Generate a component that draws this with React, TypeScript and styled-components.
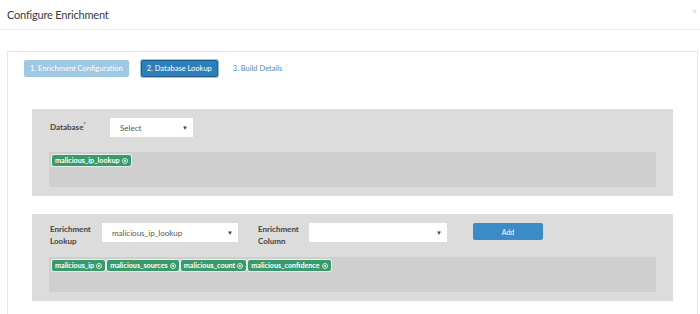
import React from "react";
import styled, { createGlobalStyle } from "styled-components";

const GlobalStyle = createGlobalStyle`
  html, body {
    margin: 0;
    padding: 0;
    background: #ffffff;
    font-family: Lato, "Open Sans", sans-serif;
    overflow: hidden;
  }
`;

const Page = styled.div`
  width: 700px;
  height: 314px;
  overflow: hidden;
`;

const ModalHeader = styled.div`
  height: 29px;
  display: flex;
  align-items: center;
  justify-content: space-between;
  padding: 0 3px 0 7px;
  border-bottom: 1px solid #eeeeee;
`;

const Title = styled.div`
  font-size: 11px;
  letter-spacing: -0.2px;
  color: #3a3a3a;
`;

const Close = styled.span`
  font-size: 8px;
  color: #c8c8c8;
  margin-top: -8px;
`;

const ModalBody = styled.div`
  padding: 21px 2px 0 7px;
`;

const Card = styled.div`
  border: 1px solid #e6e6e6;
  border-bottom: none;
  padding: 8px 24px 40px 16px;
`;

const Steps = styled.div`
  display: flex;
  align-items: center;
  gap: 12px;
`;

const Step = styled.div<{ $state: "done" | "active" | "todo" }>`
  height: 17px;
  display: flex;
  align-items: center;
  padding: 0 ${(p) => (p.$state === "todo" ? "2px" : "5px")};
  font-size: 7.5px;
  border-radius: 2px;
  box-sizing: border-box;
  color: ${(p) => (p.$state === "todo" ? "#5a88ad" : "#ffffff")};
  background: ${(p) =>
    p.$state === "done" ? "#9ec8e4" : p.$state === "active" ? "#2c7fb8" : "transparent"};
  border: 1px solid
    ${(p) => (p.$state === "active" ? "#1f5f8f" : "transparent")};
  ${(p) => p.$state === "active" && "box-shadow: 0 0 0 1px #9cc3de;"}
`;

const Panel = styled.div<{ $first?: boolean }>`
  margin: ${(p) => (p.$first ? "32px" : "18px")} 0 0 8px;
  background: #dcdcdc;
  padding: 9px 17px;
`;

const Row = styled.div`
  display: flex;
  align-items: flex-start;
  min-height: 24px;
`;

const Label = styled.div<{ $w: number; $gap?: number }>`
  width: ${(p) => p.$w}px;
  margin-left: ${(p) => p.$gap ?? 0}px;
  flex-shrink: 0;
  padding-left: 1px;
  box-sizing: border-box;
  font-size: 8px;
  line-height: 12px;
  font-weight: 700;
  color: #444444;

  sup {
    font-size: 5px;
    vertical-align: 4px;
  }
`;

const Select = styled.div<{ $w: number }>`
  width: ${(p) => p.$w}px;
  height: 19px;
  background: #ffffff;
  display: flex;
  align-items: center;
  justify-content: space-between;
  padding: 0 5px 0 10px;
  box-sizing: border-box;
  font-size: 8px;
  color: #555555;
  flex-shrink: 0;
`;

const Caret = styled.span`
  font-size: 6px;
  color: #444444;
`;

const AddButton = styled.button`
  margin-left: 26px;
  width: 70px;
  height: 17px;
  border: none;
  border-radius: 2px;
  background: #3a8bc8;
  color: #ffffff;
  font-family: inherit;
  font-size: 7px;
  padding: 0;
`;

const TagBox = styled.div`
  margin-top: 10px;
  height: 35px;
  background: #cfcfcf;
  padding: 3px;
  box-sizing: border-box;
  display: flex;
  align-items: flex-start;
  gap: 2px;
`;

const Tag = styled.span`
  height: 11px;
  display: inline-flex;
  align-items: center;
  gap: 2px;
  padding: 0 3px;
  border-radius: 2px;
  background: #3a9a6c;
  color: #ffffff;
  font-size: 7.2px;
  font-weight: 700;
  box-shadow: 0 0 0 1px #e3efe8;
`;

function CloseIcon() {
  return (
    <svg width="6" height="6" viewBox="0 0 6 6">
      <circle cx="3" cy="3" r="2.5" fill="none" stroke="#ffffff" strokeWidth="0.8" />
      <path d="M2 2 L4 4 M4 2 L2 4" stroke="#ffffff" strokeWidth="0.7" />
    </svg>
  );
}

function Chip({ name }: { name: string }) {
  return (
    <Tag>
      {name}
      <CloseIcon />
    </Tag>
  );
}

export default function App() {
  return (
    <Page>
      <GlobalStyle />
      <ModalHeader>
        <Title>Configure Enrichment</Title>
        <Close>×</Close>
      </ModalHeader>
      <ModalBody>
        <Card>
          <Steps>
            <Step $state="done">1. Enrichment Configuration</Step>
            <Step $state="active">2. Database Lookup</Step>
            <Step $state="todo">3. Build Details</Step>
          </Steps>

          <Panel $first>
            <Row>
              <Label $w={61}>
                Database<sup>*</sup>
              </Label>
              <Select $w={83}>
                Select <Caret>▼</Caret>
              </Select>
            </Row>
            <TagBox>
              <Chip name="malicious_ip_lookup" />
            </TagBox>
          </Panel>

          <Panel>
            <Row>
              <Label $w={53}>
                Enrichment
                <br />
                Lookup
              </Label>
              <Select $w={136}>
                malicious_ip_lookup <Caret>▼</Caret>
              </Select>
              <Label $w={52} $gap={19}>
                Enrichment
                <br />
                Column
              </Label>
              <Select $w={138}>
                <span />
                <Caret>▼</Caret>
              </Select>
              <AddButton>Add</AddButton>
            </Row>
            <TagBox>
              <Chip name="malicious_ip" />
              <Chip name="malicious_sources" />
              <Chip name="malicious_count" />
              <Chip name="malicious_confidence" />
            </TagBox>
          </Panel>
        </Card>
      </ModalBody>
    </Page>
  );
}
